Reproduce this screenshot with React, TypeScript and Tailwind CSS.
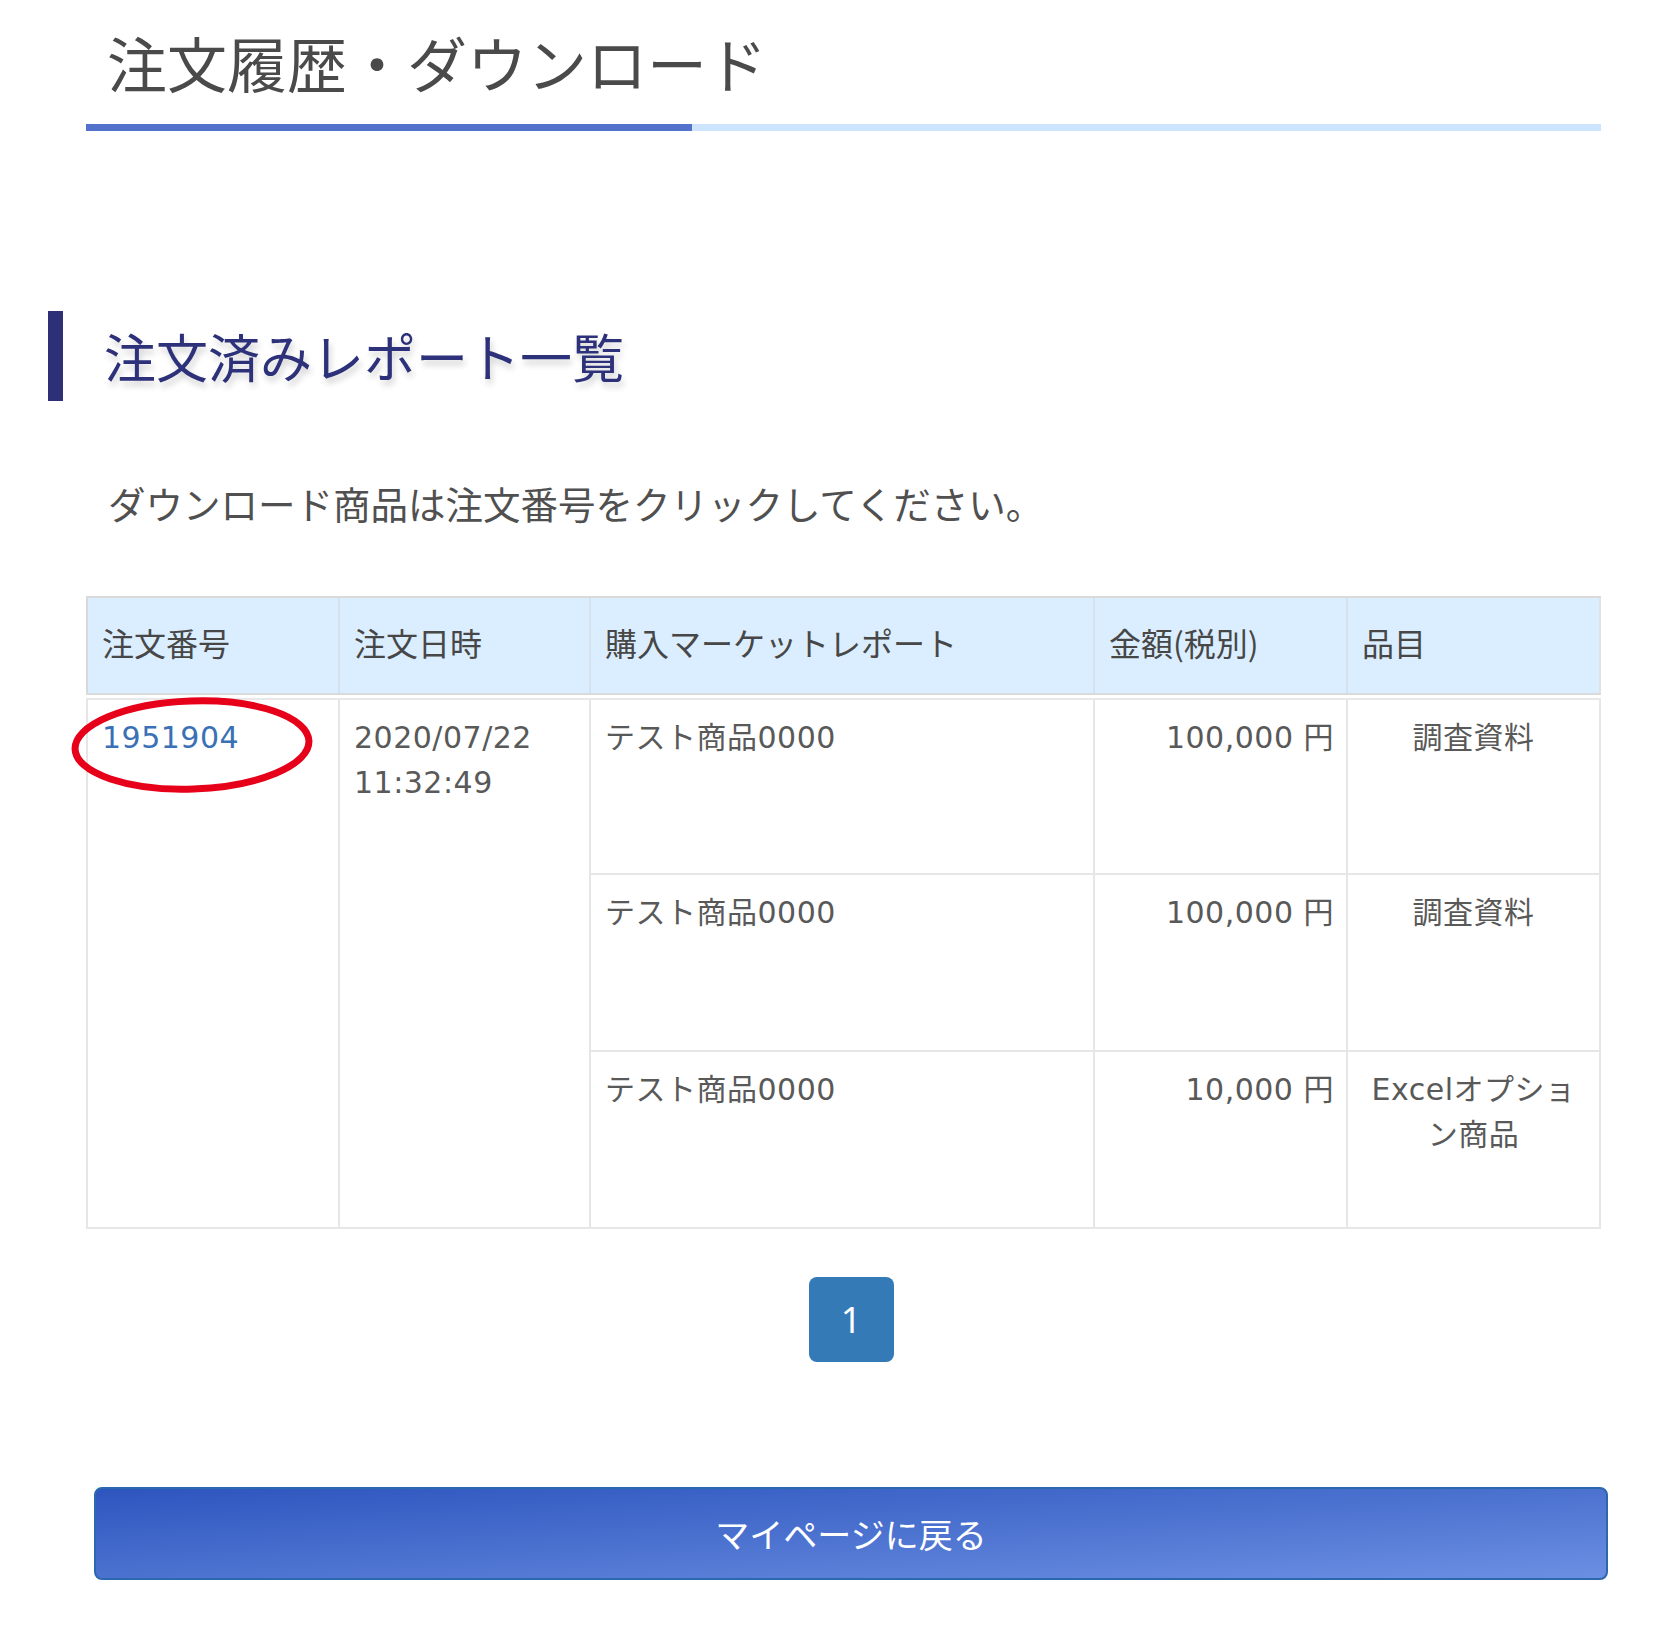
import React from "react";

const jp = "font-['Noto_Sans_CJK_JP','Noto_Sans',sans-serif]";
const body = "font-['DejaVu_Sans','Noto_Sans_CJK_JP',sans-serif]";

const cols = "grid grid-cols-[254px_251px_504px_253px_253px]";

const items = [
  { name: "テスト商品0000", price: "100,000 円", kind: <>調査資料</> },
  { name: "テスト商品0000", price: "100,000 円", kind: <>調査資料</> },
  {
    name: "テスト商品0000",
    price: "10,000 円",
    kind: (
      <>
        Excelオプショ
        <br />
        ン商品
      </>
    ),
  },
];

export default function App() {
  return (
    <div className={`w-[1678px] bg-white pb-[55px] ${jp}`}>
      {/* Page title */}
      <div className="ml-[86px] w-[1515px] pt-[17px]">
        <h1 className="pl-[21px] text-[60px] leading-[90px] font-normal text-[#4a4a4a]">
          注文履歴・ダウンロード
        </h1>
        <div className="mt-[17px] flex h-[7px]">
          <div className="w-[606px] bg-[#5272cc]" />
          <div className="flex-1 bg-[#cde4ff]" />
        </div>
      </div>

      {/* Section heading */}
      <div className="ml-[48px] mt-[180px] flex items-center gap-[41px]">
        <div className="h-[90px] w-[15px] bg-[#2e3077]" />
        <h2 className="text-[52px] leading-[90px] font-normal text-[#2d3179] [text-shadow:2px_5px_6px_rgba(0,0,0,0.18)]">
          注文済みレポート一覧
        </h2>
      </div>

      {/* Note */}
      <p className="ml-[108px] mt-[74px] text-[37.5px] leading-[56px] text-[#505050]">
        ダウンロード商品は注文番号をクリックしてください。
      </p>

      {/* Table */}
      <div className="ml-[86px] mt-[65px] w-[1515px]">
        <div className={`${cols} border-t-2 border-b-2 border-[#dadada] bg-[#dbeeff]`}>
          {["注文番号", "注文日時", "購入マーケットレポート", "金額(税別)", "品目"].map((h, i) => (
            <div
              key={h}
              className={`h-[95px] px-[14px] pt-[20px] text-[32px] leading-[48px] text-[#474747] ${
                i === 0 ? "border-l-2 border-l-[#d9d9d9]" : ""
              } ${i === 4 ? "border-r-2 border-r-[#e2e2e2]" : "border-r-2 border-r-[#d5e1ec]"}`}
            >
              {h}
            </div>
          ))}
        </div>

        <div
          className={`relative mt-[3px] ${cols} grid-rows-[175px_177px_177px] border-t-2 border-[#e8e8e8] ${body} text-[30px] leading-[45px] tracking-[0.5px] text-[#595959]`}
        >
          <div className="row-span-3 border-l-2 border-r-2 border-b-2 border-[#e6e6e6] px-[14px] pt-[15px]">
            <a href="#" className="text-[#3a70b5]">
              1951904
            </a>
          </div>
          <div className="row-span-3 border-r-2 border-b-2 border-[#e6e6e6] px-[14px] pt-[15px]">
            2020/07/22
            <br />
            11:32:49
          </div>
          {items.map((it, i) => (
            <React.Fragment key={i}>
              <div className="border-r-2 border-b-2 border-[#e6e6e6] px-[14px] pt-[15px]">{it.name}</div>
              <div className="border-r-2 border-b-2 border-[#e6e6e6] pl-[14px] pr-[12px] pt-[15px] text-right">
                {it.price}
              </div>
              <div className="border-r-2 border-b-2 border-[#e6e6e6] px-[8px] pt-[15px] text-center">
                {it.kind}
              </div>
            </React.Fragment>
          ))}

          {/* hand-drawn red circle */}
          <svg
            className="pointer-events-none absolute left-[-18px] top-[-7px]"
            width="250"
            height="104"
            viewBox="0 0 250 104"
          >
            <ellipse
              cx="124"
              cy="52"
              rx="117"
              ry="44"
              fill="none"
              stroke="#e60019"
              strokeWidth="7"
              transform="rotate(-2 124 52)"
            />
          </svg>
        </div>
      </div>

      {/* Pagination */}
      <div className="ml-[94px] mt-[48px] flex w-[1514px] justify-center">
        <a
          href="#"
          className="flex h-[85px] w-[85px] items-center justify-center rounded-[8px] bg-[#337ab7] font-['Noto_Sans',sans-serif] text-[36px] text-white"
        >
          1
        </a>
      </div>

      {/* Back button */}
      <div className="ml-[94px] mt-[125px] w-[1514px]">
        <button className="flex h-[93px] w-full items-center justify-center rounded-[8px] border-2 border-[#2c68ad] bg-[linear-gradient(to_bottom_right,#2d55be,#6b8fe2)] text-[34px] text-white">
          マイページに戻る
        </button>
      </div>
    </div>
  );
}
